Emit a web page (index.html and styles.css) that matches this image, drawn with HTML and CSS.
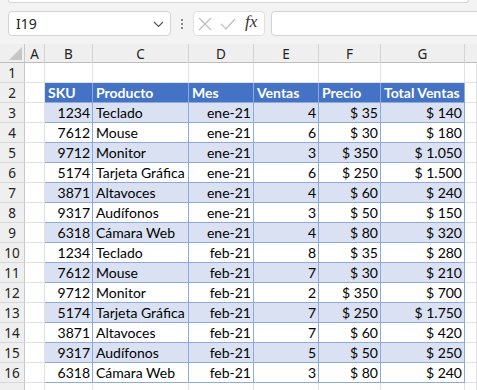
FILE: index.html
```html
<!DOCTYPE html>
<html lang="es">
  <head>
    <meta charset="UTF-8" />
    <title>Ventas</title>
    <link rel="stylesheet" href="styles.css">
  </head>
  <body>
    <div class="ribbon"></div>

    <div class="formula-bar">
      <div class="name-box">
        <span>I19</span>
        <svg class="chevron" width="11" height="7" viewBox="0 0 11 7">
          <path d="M1 1 L5.5 5.5 L10 1" fill="none" stroke="#555" stroke-width="1.2" />
        </svg>
      </div>
      <div class="grip"><i></i><i></i><i></i></div>
      <div class="fx-buttons">
        <svg width="14" height="14" viewBox="0 0 14 14">
          <path d="M1 1 L13 13 M13 1 L1 13" stroke="#bdbdbd" stroke-width="1.2" />
        </svg>
        <svg width="16" height="14" viewBox="0 0 16 14">
          <path d="M1 7 L6 12 L15 2" fill="none" stroke="#bdbdbd" stroke-width="1.2" />
        </svg>
        <span class="fx">fx</span>
      </div>
      <div class="formula-input"></div>
    </div>

    <div class="sheet" id="sheet">
      <div class="corner"><b></b></div>
      <div class="col-head">A</div>
      <div class="col-head">B</div>
      <div class="col-head">C</div>
      <div class="col-head">D</div>
      <div class="col-head">E</div>
      <div class="col-head">F</div>
      <div class="col-head">G</div>
      <div class="col-head last"></div>
    </div>

    <script>
      const rows = [
        ["1234", "Teclado", "ene-21", 4, 35],
        ["7612", "Mouse", "ene-21", 6, 30],
        ["9712", "Monitor", "ene-21", 3, 350],
        ["5174", "Tarjeta Gráfica", "ene-21", 6, 250],
        ["3871", "Altavoces", "ene-21", 4, 60],
        ["9317", "Audífonos", "ene-21", 3, 50],
        ["6318", "Cámara Web", "ene-21", 4, 80],
        ["1234", "Teclado", "feb-21", 8, 35],
        ["7612", "Mouse", "feb-21", 7, 30],
        ["9712", "Monitor", "feb-21", 2, 350],
        ["5174", "Tarjeta Gráfica", "feb-21", 7, 250],
        ["3871", "Altavoces", "feb-21", 7, 60],
        ["9317", "Audífonos", "feb-21", 5, 50],
        ["6318", "Cámara Web", "feb-21", 3, 80]
      ];

      const sheet = document.getElementById("sheet");

      function money(n) {
        return "$ " + n.toLocaleString("de-DE");
      }

      function addRow(num, cells, rowClass) {
        let html = '<div class="row-head">' + num + "</div>";
        html += '<div class="cell"></div>';
        cells.forEach((c) => {
          html += '<div class="cell ' + rowClass + " " + (c.cls || "") + '">' + c.text + "</div>";
        });
        html += '<div class="cell"></div>';
        sheet.insertAdjacentHTML("beforeend", html);
      }

      // row 1 is empty
      addRow(1, Array(6).fill({ text: "" }), "");

      addRow(
        2,
        ["SKU", "Producto", "Mes", "Ventas", "Precio", "Total Ventas"].map((t) => ({ text: t })),
        "t-head"
      );

      rows.forEach((r, i) => {
        addRow(
          i + 3,
          [
            { text: r[0], cls: "num" },
            { text: r[1] },
            { text: r[2], cls: "num" },
            { text: r[3], cls: "num" },
            { text: money(r[4]), cls: "num" },
            { text: money(r[3] * r[4]), cls: "num" }
          ],
          i % 2 === 0 ? "t-band" : "t-plain"
        );
      });

      // row 17 only peeks in at the bottom edge
      addRow("", Array(6).fill({ text: "" }), "");
    </script>
  </body>
</html>
```

FILE: styles.css
```css
body {
  margin: 0;
  width: 477px;
  height: 390px;
  overflow: hidden;
  background-color: #f3f3f3;
  font-family: "Segoe UI", "Noto Sans", sans-serif;
}
.ribbon {
  height: 2px;
  margin: 0 8px 0 8px;
  background-color: #fff;
  border: 1px solid #d6d6d6;
  border-top: none;
  border-radius: 0 0 6px 6px;
}
.formula-bar {
  display: flex;
  align-items: center;
  height: 25px;
  margin-top: 8px;
  padding-left: 8px;
}
.name-box {
  width: 163px;
  height: 25px;
  display: flex;
  align-items: center;
  justify-content: space-between;
  padding: 0 6px 0 7px;
  box-sizing: border-box;
  background-color: #fff;
  border: 1px solid #d4d4d4;
  border-radius: 4px;
  font-size: 14px;
  color: #222;
}
.chevron {
  margin-top: 1px;
}
.grip {
  width: 22px;
  display: flex;
  flex-direction: column;
  align-items: center;
  gap: 2px;
}
.grip i {
  width: 2px;
  height: 2px;
  background-color: #8a8a8a;
}
.fx-buttons {
  width: 72px;
  height: 25px;
  box-sizing: border-box;
  display: flex;
  align-items: center;
  gap: 8px;
  padding-left: 4px;
  background-color: #fff;
  border: 1px solid #e0e0e0;
  border-radius: 4px;
}
.fx {
  font-family: "Liberation Serif", serif;
  font-style: italic;
  font-size: 17px;
  color: #333;
  margin-top: -3px;
  margin-left: 1px;
}
.formula-input {
  flex: 1;
  height: 25px;
  margin-left: 6px;
  margin-right: -10px;
  box-sizing: border-box;
  background-color: #fff;
  border: 1px solid #d4d4d4;
  border-radius: 4px;
}
.sheet {
  margin-top: 8px;
  display: grid;
  grid-template-columns: 25px 20px 48px 96px 65px 65px 62px 84px 12px;
  grid-template-rows: 19px;
  grid-auto-rows: 20px;
  background-color: #fff;
  font-family: "Lato", "Liberation Sans", sans-serif;
  font-size: 14px;
}
.corner,
.col-head,
.row-head {
  background-color: #efefef;
  color: #222;
  font-family: "Segoe UI", "Noto Sans", sans-serif;
  font-size: 13.5px;
  display: flex;
  align-items: center;
  justify-content: center;
  box-sizing: border-box;
}
.corner {
  position: relative;
  border-right: 1px solid #c8c8c8;
  border-bottom: 1px solid #bdbdbd;
}
.corner b {
  position: absolute;
  right: 2px;
  bottom: 2px;
  width: 0;
  height: 0;
  border-left: 13px solid transparent;
  border-bottom: 13px solid #c6c6c6;
}
.col-head {
  border-right: 1px solid #d4d4d4;
  border-bottom: 1px solid #bdbdbd;
  padding-top: 1px;
}
.col-head.last {
  border-right: none;
}
.row-head {
  border-right: 1px solid #c8c8c8;
  border-bottom: 1px solid #d8d8d8;
}
.cell {
  box-sizing: border-box;
  border-right: 1px solid #e1e1e1;
  border-bottom: 1px solid #e1e1e1;
  padding: 0 2px 0 3px;
  display: flex;
  align-items: center;
  white-space: nowrap;
  overflow: hidden;
  color: #000;
}
.num {
  justify-content: flex-end;
}
.t-head {
  background-color: #4472c4;
  color: #fff;
  font-weight: bold;
  border-right-color: #8ea9db;
  border-bottom-color: #8ea9db;
}
.t-band {
  background-color: #d9e1f2;
  border-right-color: #8ea9db;
  border-bottom-color: #8ea9db;
}
.t-plain {
  background-color: #fff;
  border-right-color: #8ea9db;
  border-bottom-color: #8ea9db;
}
```
